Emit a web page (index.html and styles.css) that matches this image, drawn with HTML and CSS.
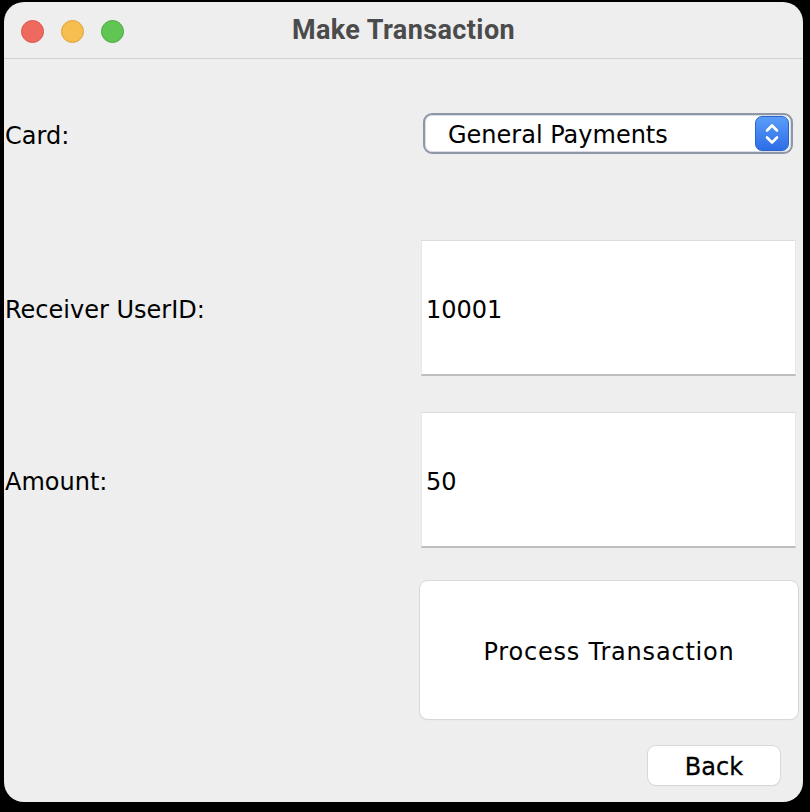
FILE: index.html
```html
<!DOCTYPE html>
<html>
<head>
<meta charset="utf-8">
<link rel="stylesheet" href="styles.css">
</head>
<body>
<div class="window">
  <div class="titlebar">
    <div class="lights">
      <span class="light red"></span>
      <span class="light yellow"></span>
      <span class="light green"></span>
    </div>
    <div class="title">Make Transaction</div>
  </div>
  <div class="content">
    <div class="row row-card">
      <div class="label">Card:</div>
      <div class="combo">
        <span class="combo-text">General Payments</span>
        <span class="combo-arrow">
          <svg width="16" height="26" viewBox="0 0 16 26">
            <path d="M3 9.5 L8 4.5 L13 9.5" fill="none" stroke="#fff" stroke-width="2.6" stroke-linecap="round" stroke-linejoin="round"/>
            <path d="M3 16.5 L8 21.5 L13 16.5" fill="none" stroke="#fff" stroke-width="2.6" stroke-linecap="round" stroke-linejoin="round"/>
          </svg>
        </span>
      </div>
    </div>
    <div class="row row-receiver">
      <div class="label">Receiver UserID:</div>
      <div class="field">10001</div>
    </div>
    <div class="row row-amount">
      <div class="label">Amount:</div>
      <div class="field">50</div>
    </div>
    <div class="row row-button">
      <div class="label"></div>
      <div class="button big">Process Transaction</div>
    </div>
    <div class="back-row">
      <div class="button back">Back</div>
    </div>
  </div>
</div>
</body>
</html>
```

FILE: styles.css
```css
html, body {
  margin: 0;
  padding: 0;
  background: #000;
}
body {
  width: 810px;
  height: 812px;
  overflow: hidden;
}
.window {
  margin: 2px 0 0 4px;
  width: 799px;
  height: 800px;
  background: #eeeeee;
  border-radius: 20px;
  overflow: hidden;
  font-family: "DejaVu Sans", "Liberation Sans", sans-serif;
  color: #000;
}
.titlebar {
  height: 56px;
  border-bottom: 1px solid #d2d2d2;
  display: flex;
  align-items: center;
  position: relative;
}
.lights {
  display: flex;
  gap: 17px;
  padding-left: 17px;
  padding-top: 2px;
}
.light {
  width: 23px;
  height: 23px;
  border-radius: 50%;
  box-sizing: border-box;
}
.red { background: #ee6a5e; border: 1px solid #d9544a; }
.yellow { background: #f5be4f; border: 1px solid #dea236; }
.green { background: #61c554; border: 1px solid #4ba93f; }
.title {
  position: absolute;
  left: 0;
  right: 0;
  top: 0;
  height: 56px;
  line-height: 57px;
  text-align: center;
  font-family: Roboto, "Liberation Sans", sans-serif;
  font-weight: 700;
  font-size: 27px;
  letter-spacing: 0.4px;
  color: #4b4b4b;
  pointer-events: none;
}
.content {
  padding: 0 5px 0 1px;
  display: flex;
  flex-direction: column;
}
.row {
  display: grid;
  grid-template-columns: 415px 1fr;
  align-items: center;
}
.label {
  font-size: 24px;
  padding-top: 4px;
}
.row-card { margin-top: 54px; height: 41px; }
.row-receiver { margin-top: 86px; height: 136px; }
.row-amount { margin-top: 36px; height: 136px; }
.row-button { margin-top: 33px; height: 138px; }
.combo {
  margin: 0 5px 0 3px;
  height: 41px;
  box-sizing: border-box;
  border: 2px solid #8d97a6;
  border-radius: 9px;
  background: #fff;
  display: flex;
  align-items: center;
  justify-content: space-between;
  padding: 0 2px 0 23px;
  box-shadow: inset 0 0 0 1px #d9dee6;
}
.combo-text {
  font-size: 24px;
  padding-top: 2px;
}
.combo-arrow {
  width: 34px;
  height: 35px;
  box-sizing: border-box;
  border-radius: 7px;
  background: linear-gradient(#5b9df9, #2c6de6);
  border: 1px solid #2d62cc;
  display: flex;
  align-items: center;
  justify-content: center;
}
.field {
  margin: 0 2px 0 1px;
  height: 136px;
  box-sizing: border-box;
  background: #fff;
  border-top: 1px solid #dcdcdc;
  border-left: 1px solid #e8e8e8;
  border-right: 1px solid #e8e8e8;
  border-bottom: 2px solid #bdbdbd;
  display: flex;
  align-items: center;
  padding-left: 4px;
  padding-top: 4px;
  font-size: 24px;
}
.button {
  background: #fff;
  border-radius: 8px;
  box-shadow: 0 0 0 1px #d8d8d8, 0 1px 1px rgba(0,0,0,0.12);
  display: flex;
  align-items: center;
  justify-content: center;
  font-size: 24px;
}
.big {
  height: 138px;
  letter-spacing: 0.8px;
  padding-top: 4px;
  box-sizing: border-box;
}
.back-row {
  display: flex;
  justify-content: flex-end;
  margin-top: 27px;
}
.back {
  width: 132px;
  height: 39px;
  margin-right: 18px;
  padding-top: 2px;
  box-sizing: border-box;
  -webkit-text-stroke: 0.3px #000;
}
```
